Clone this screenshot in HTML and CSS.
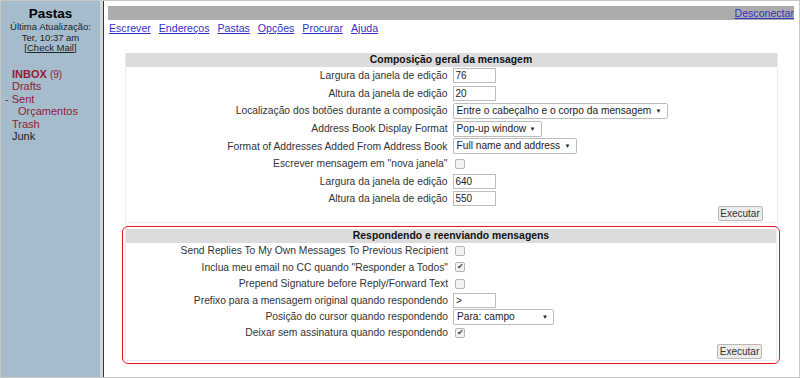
FILE: index.html
```html
<!DOCTYPE html>
<html>
<head>
<meta charset="utf-8">
<link rel="stylesheet" href="styles.css">
</head>
<body>
<div class="frame">
  <aside class="side">
    <div class="side-title">Pastas</div>
    <div class="side-small">Última Atualização:</div>
    <div class="side-small">Ter, 10:37 am</div>
    <div class="side-small">[<a href="#" class="check">Check Mail</a>]</div>
    <ul class="folders">
      <li class="f red"><b>INBOX</b> <span class="cnt">(9)</span></li>
      <li class="f red">Drafts</li>
      <li class="f red sent"><span class="dash">-</span> Sent</li>
      <li class="f red sub">Orçamentos</li>
      <li class="f red">Trash</li>
      <li class="f">Junk</li>
    </ul>
  </aside>
  <main class="main">
    <div class="topbar"><a href="#" class="lnk">Desconectar</a></div>
    <nav class="nav">
      <a href="#" class="lnk">Escrever</a>
      <a href="#" class="lnk">Endereços</a>
      <a href="#" class="lnk">Pastas</a>
      <a href="#" class="lnk">Opções</a>
      <a href="#" class="lnk">Procurar</a>
      <a href="#" class="lnk">Ajuda</a>
    </nav>

    <section class="box">
      <div class="hdr">Composição geral da mensagem</div>
      <div class="row"><label>Largura da janela de edição</label><div class="ctl"><span class="txt">76</span></div></div>
      <div class="row"><label>Altura da janela de edição</label><div class="ctl"><span class="txt">20</span></div></div>
      <div class="row"><label>Localização dos botões durante a composição</label><div class="ctl"><span class="sel w1">Entre o cabeçalho e o corpo da mensagem<i>▼</i></span></div></div>
      <div class="row"><label>Address Book Display Format</label><div class="ctl"><span class="sel w2">Pop-up window<i>▼</i></span></div></div>
      <div class="row"><label>Format of Addresses Added From Address Book</label><div class="ctl"><span class="sel w3">Full name and address<i>▼</i></span></div></div>
      <div class="row"><label>Escrever mensagem em "nova janela"</label><div class="ctl"><span class="cb"></span></div></div>
      <div class="row"><label>Largura da janela de edição</label><div class="ctl"><span class="txt">640</span></div></div>
      <div class="row"><label>Altura da janela de edição</label><div class="ctl"><span class="txt">550</span></div></div>
      <div class="foot"><span class="btn">Executar</span></div>
    </section>

    <div class="hl">
      <section class="box inner">
        <div class="hdr">Respondendo e reenviando mensagens</div>
        <div class="row r2"><label>Send Replies To My Own Messages To Previous Recipient</label><div class="ctl"><span class="cb"></span></div></div>
        <div class="row r2"><label>Inclua meu email no CC quando "Responder a Todos"</label><div class="ctl"><span class="cb on">✔</span></div></div>
        <div class="row r2"><label>Prepend Signature before Reply/Forward Text</label><div class="ctl"><span class="cb"></span></div></div>
        <div class="row r2"><label>Prefixo para a mensagem original quando respondendo</label><div class="ctl"><span class="txt">&gt;</span></div></div>
        <div class="row r2"><label>Posição do cursor quando respondendo</label><div class="ctl"><span class="sel w4">Para: campo<i>▼</i></span></div></div>
        <div class="row r2"><label>Deixar sem assinatura quando respondendo</label><div class="ctl"><span class="cb on">✔</span></div></div>
        <div class="foot f2"><span class="btn">Executar</span></div>
      </section>
    </div>
  </main>
</div>
</body>
</html>
```

FILE: styles.css
```css
* { box-sizing: border-box; }
html, body { margin: 0; padding: 0; background: #fff; }
body { font-family: "Liberation Sans", Arial, sans-serif; font-size: 10.3px; color: #222; }

.frame {
  width: 800px; height: 378px;
  border: 1px solid #c8c8c8;
  display: flex;
  overflow: hidden;
}

.side {
  width: 102px;
  flex: none;
  background: #a5bccd;
  border-right: 3px solid #d6d6d6;
  padding-top: 5px;
  color: #222;
}
.side-title { text-align: center; font-weight: bold; font-size: 13.5px; line-height: 16px; margin-bottom: 0; color: #000; }
.side-small { text-align: center; font-size: 9.5px; line-height: 10.5px; color: #222; }
.check { color: #222; }
.folders { list-style: none; margin: 14px 0 0; padding: 0 0 0 11px; font-size: 11px; }
.f { height: 12.6px; line-height: 12.6px; color: #222; }
.red { color: #922032; }
.cnt { font-size: 10px; }
.sent { margin-left: -7px; }
.dash { color: #922032; }
.sub { padding-left: 6px; }

.main {
  flex: 1;
  border-left: 1px solid #333;
  padding: 5px 5px 0 4px;
  min-width: 0;
}
.topbar {
  background: #acacac;
  height: 14px;
  text-align: right;
  line-height: 14px;
  font-size: 10.6px;
}
.lnk { color: #3131c6; text-decoration: underline; }
.nav { font-size: 10.6px; line-height: 14px; margin-top: 1px; padding-left: 1px; display: flex; gap: 8px; }

.box {
  width: 653px;
  margin: 18px auto 0;
  border: 1px solid #ececec;
  border-top: 0;
}
.hdr {
  background: #dcdcdc;
  font-weight: bold;
  text-align: center;
  height: 14px;
  line-height: 14px;
  font-size: 10.4px;
  color: #111;
}
.row { display: flex; align-items: center; height: 17.6px; }
.row label { width: 327px; text-align: right; padding-right: 5px; color: #333; white-space: nowrap; }
.ctl { flex: 1; display: flex; align-items: center; }
.txt {
  display: inline-block; width: 43px; height: 15px;
  border: 1px solid #bdbdbd; font-size: 10px; line-height: 13px; padding-left: 2px; color: #222;
}
.sel {
  display: inline-block; height: 16px; white-space: nowrap; overflow: hidden;
  border: 1px solid #bdbdbd; border-radius: 2px; font-size: 10.2px; line-height: 14px; padding-left: 3px;
  position: relative; color: #222; background: #fff;
}
.sel i { position: absolute; right: 5px; top: 0; font-style: normal; font-size: 6px; line-height: 14px; }
.w1 { width: 215px; }
.w2 { width: 89px; }
.w3 { width: 124px; }
.w4 { width: 101px; }
.cb {
  display: inline-block; width: 10px; height: 10px; margin-left: 2px;
  border: 1px solid #b5b5b5; border-radius: 2px; background: #f3f3f3;
  font-size: 8px; line-height: 8px; text-align: center; color: #444;
}
.foot { display: flex; justify-content: flex-end; padding: 0 14px 1px 0; margin-top: -2px; }
.btn {
  display: inline-block; width: 45px; height: 15px;
  border: 1px solid #b8b8b8; background: #ececec; border-radius: 2px;
  font-size: 10px; line-height: 13px; text-align: center; color: #333;
}
.hl {
  width: 658px;
  margin: 3px auto 0;
  border: 1px solid #e8141c;
  border-radius: 6px;
  padding: 2px 2px 2px 2px;
}
.inner { width: auto; margin: 0; }
.r2 { height: 16.4px; }
.f2 { padding-top: 3px; padding-bottom: 1px; margin-top: 0; }
```
